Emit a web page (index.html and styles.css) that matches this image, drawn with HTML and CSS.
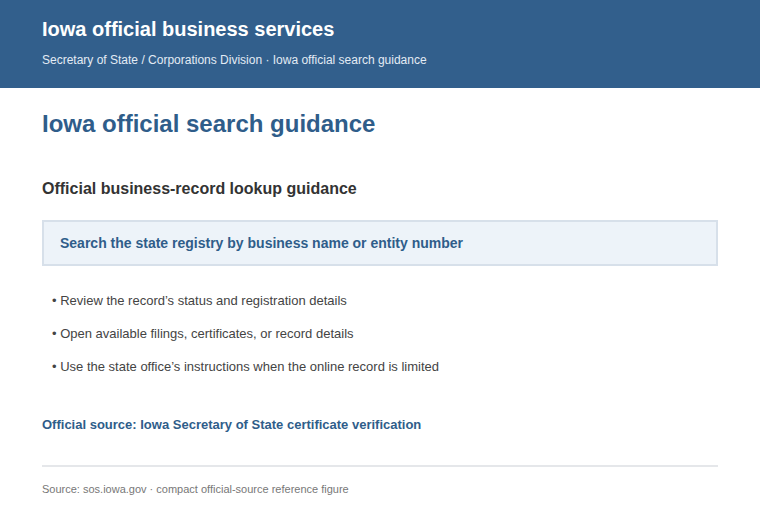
FILE: index.html
```html
<!DOCTYPE html>
<html lang="en">
<head>
    <meta charset="UTF-8">
    <meta name="viewport" content="width=device-width, initial-scale=1.0">
    <title>Iowa official search guidance</title>
    <link rel="stylesheet" href="styles.css">
</head>
<body>
    <header class="site-header">
        <div class="site-title">Iowa official business services</div>
        <div class="site-sub">Secretary of State / Corporations Division · Iowa official search guidance</div>
    </header>

    <main class="content">
        <h1>Iowa official search guidance</h1>
        <h2>Official business-record lookup guidance</h2>

        <div class="callout">Search the state registry by business name or entity number</div>

        <ul class="steps">
            <li>Review the record’s status and registration details</li>
            <li>Open available filings, certificates, or record details</li>
            <li>Use the state office’s instructions when the online record is limited</li>
        </ul>

        <p class="source-link">Official source: Iowa Secretary of State certificate verification</p>

        <footer class="note">Source: sos.iowa.gov · compact official-source reference figure</footer>
    </main>
</body>
</html>
```

FILE: styles.css
```css
body {
    font-family: "Liberation Sans", Arial, sans-serif;
    background-color: #ffffff;
    margin: 0;
    padding: 0;
    color: #333333;
}

.site-header {
    background-color: #325f8c;
    color: #ffffff;
    padding: 17px 42px 20px;
    height: 51px;
}

.site-title {
    font-size: 20px;
    font-weight: bold;
    line-height: 24px;
}

.site-sub {
    font-size: 12px;
    line-height: 14px;
    margin-top: 12px;
    color: #e3ebf4;
}

.content {
    padding: 0 42px;
}

h1 {
    font-size: 24px;
    color: #2f5d8a;
    margin: 22px 0 0;
    line-height: 28px;
}

h2 {
    font-size: 16px;
    color: #333333;
    margin: 41px 0 0;
    line-height: 20px;
}

.callout {
    margin-top: 21px;
    background-color: #edf3f9;
    border: 2px solid #d7e0ea;
    padding: 13px 16px;
    font-size: 14px;
    font-weight: bold;
    color: #2f5d8a;
    line-height: 16px;
}

.steps {
    list-style: none;
    margin: 27px 0 0;
    padding: 0 0 0 10px;
}

.steps li {
    font-size: 13px;
    color: #444444;
    line-height: 15px;
    margin-bottom: 18px;
}

.steps li::before {
    content: "• ";
}

.source-link {
    font-size: 13px;
    font-weight: bold;
    color: #2f5d8a;
    margin: 43px 0 0;
    line-height: 15px;
}

.note {
    margin-top: 33px;
    border-top: 2px solid #e5e7ea;
    padding-top: 15px;
    font-size: 11px;
    color: #777777;
    line-height: 14px;
}
```
